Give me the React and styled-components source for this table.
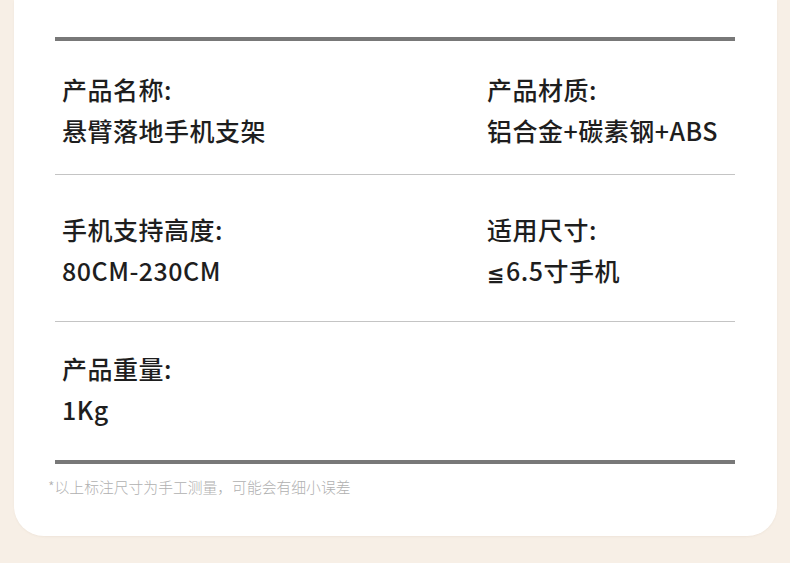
import React from "react";
import styled, { createGlobalStyle } from "styled-components";

const Global = createGlobalStyle`
  html, body { margin: 0; padding: 0; background: #f7efe6; }
  body { font-family: "Noto Sans CJK SC", "Noto Sans", sans-serif; }
`;

const Page = styled.div`
  width: 790px;
  height: 563px;
  background: #f7efe6;
  overflow: hidden;
`;

const Card = styled.div`
  margin-left: 14px;
  width: 763px;
  box-sizing: border-box;
  background: #ffffff;
  border-radius: 0 0 30px 30px;
  padding: 37px 42px 39px 34px;
  box-shadow: 0 1px 2px rgba(200, 180, 160, 0.15);
`;

const Table = styled.div`
  margin-left: 7px;
  border-top: 4px solid #787878;
  border-bottom: 4px solid #787878;
`;

const Row = styled.div`
  display: grid;
  grid-template-columns: 425px 1fr;
  padding: ${(p) => p.$top}px 0 ${(p) => p.$bottom}px 7px;
  border-bottom: ${(p) => (p.$last ? "none" : "1px solid #c4c4c4")};
`;

const Cell = styled.div`
  display: flex;
  flex-direction: column;
  color: #1e1e1e;
  font-size: 25px;
  font-weight: 500;
  line-height: 41px;
  letter-spacing: 0.5px;
  white-space: nowrap;
`;

const Label = styled.div`
  height: 41px;
`;
const Value = styled.div`
  height: 41px;
`;

const Symbol = styled.span`
  font-family: "DejaVu Sans", sans-serif;
  font-size: 21px;
  font-weight: 700;
  line-height: 1;
  margin-right: 1px;
`;

const Note = styled.div`
  margin-top: 13px;
  font-size: 14.8px;
  line-height: 20px;
  color: #b0b0b0;
  font-weight: 300;
`;

const rows = [
  { top: 28, bottom: 23, items: [["产品名称:", "悬臂落地手机支架"], ["产品材质:", "铝合金+碳素钢+ABS"]] },
  { top: 34, bottom: 30, items: [["手机支持高度:", "80CM-230CM"], ["适用尺寸:", <><Symbol>≦</Symbol>6.5寸手机</>]] },
  { top: 26, bottom: 30, items: [["产品重量:", "1Kg"]] },
];

export default function App() {
  return (
    <Page>
      <Global />
      <Card>
        <Table>
          {rows.map((r, i) => (
            <Row key={i} $top={r.top} $bottom={r.bottom} $last={i === rows.length - 1}>
              {r.items.map(([l, v]) => (
                <Cell key={l}>
                  <Label>{l}</Label>
                  <Value>{v}</Value>
                </Cell>
              ))}
            </Row>
          ))}
        </Table>
        <Note>*以上标注尺寸为手工测量，可能会有细小误差</Note>
      </Card>
    </Page>
  );
}
